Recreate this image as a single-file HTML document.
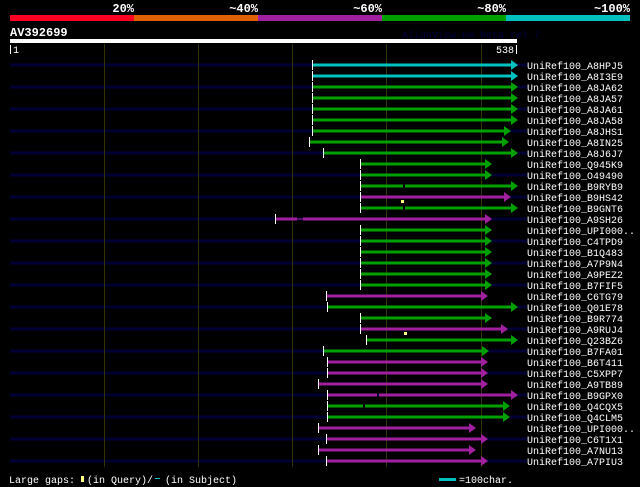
<!DOCTYPE html>
<html><head><meta charset="utf-8"><style>
html,body{margin:0;padding:0;background:#000;width:640px;height:487px;overflow:hidden}
svg{display:block}
text{font-family:"Liberation Mono",monospace}
</style></head><body>
<svg width="640" height="487" xmlns="http://www.w3.org/2000/svg">
<rect width="640" height="487" fill="#000"/>
<g font-size="12" font-weight="bold" fill="#fff" text-anchor="end">
<text x="134" y="12">20%</text><text x="258" y="12">~40%</text><text x="382" y="12">~60%</text><text x="506" y="12">~80%</text><text x="630" y="12">~100%</text>
</g>
<rect x="10" y="15" width="124" height="6" fill="#ff0020"/>
<rect x="134" y="15" width="124" height="6" fill="#e06000"/>
<rect x="258" y="15" width="124" height="6" fill="#a020a0"/>
<rect x="382" y="15" width="124" height="6" fill="#00a000"/>
<rect x="506" y="15" width="124" height="6" fill="#00c0c0"/>
<text x="10" y="36" font-size="12" font-weight="bold" fill="#fff">AV392699</text>
<text x="402" y="38" font-size="10" fill="#000040">AlignView.pm Beta rel.7</text>
<rect x="10" y="39" width="507" height="4" fill="#fff"/>
<rect x="10" y="45" width="1" height="9" fill="#fff"/>
<text x="13" y="53" font-size="10" fill="#fff">1</text>
<text x="514" y="53" font-size="10" fill="#fff" text-anchor="end">538</text>
<rect x="516" y="45" width="1" height="9" fill="#fff"/>
<g fill="#000033">
<rect x="10" y="63.5" width="517" height="3"/><rect x="10" y="85.5" width="517" height="3"/><rect x="10" y="107.5" width="517" height="3"/><rect x="10" y="129.5" width="517" height="3"/><rect x="10" y="151.5" width="517" height="3"/><rect x="10" y="173.5" width="517" height="3"/><rect x="10" y="195.5" width="517" height="3"/><rect x="10" y="217.5" width="517" height="3"/><rect x="10" y="239.5" width="517" height="3"/><rect x="10" y="261.5" width="517" height="3"/><rect x="10" y="283.5" width="517" height="3"/><rect x="10" y="305.5" width="517" height="3"/><rect x="10" y="327.5" width="517" height="3"/><rect x="10" y="349.5" width="517" height="3"/><rect x="10" y="371.5" width="517" height="3"/><rect x="10" y="393.5" width="517" height="3"/><rect x="10" y="415.5" width="517" height="3"/><rect x="10" y="437.5" width="517" height="3"/><rect x="10" y="459.5" width="517" height="3"/>
</g>
<g fill="#333300"><rect x="104" y="44" width="1" height="423"/><rect x="198" y="44" width="1" height="423"/><rect x="292" y="44" width="1" height="423"/><rect x="386" y="44" width="1" height="423"/><rect x="481" y="44" width="1" height="423"/></g>
<g id="bars">
<!-- row helper: bar rect, tick, arrow -->
<g fill="#00c0c0"><rect x="312" y="63.5" width="200" height="3"/><rect x="312" y="74.5" width="200" height="3"/>
<polygon points="511,60 518,65 511,70"/><polygon points="511,71 518,76 511,81"/></g>
<g fill="#00a000">
<rect x="312" y="85.5" width="200" height="3"/><polygon points="511,82 518,87 511,92"/>
<rect x="312" y="96.5" width="200" height="3"/><polygon points="511,93 518,98 511,103"/>
<rect x="312" y="107.5" width="200" height="3"/><polygon points="511,104 518,109 511,114"/>
<rect x="312" y="118.5" width="200" height="3"/><polygon points="511,115 518,120 511,125"/>
<rect x="312" y="129.5" width="193" height="3"/><polygon points="504,126 511,131 504,136"/>
<rect x="309" y="140.5" width="194" height="3"/><polygon points="502,137 509,142 502,147"/>
<rect x="323" y="151.5" width="189" height="3"/><polygon points="511,148 518,153 511,158"/>
<rect x="360" y="162.5" width="126" height="3"/><polygon points="485,159 492,164 485,169"/>
<rect x="360" y="173.5" width="126" height="3"/><polygon points="485,170 492,175 485,180"/>
<rect x="360" y="184.5" width="43" height="3"/><rect x="405" y="184.5" width="107" height="3"/><polygon points="511,181 518,186 511,191"/>
<rect x="360" y="206.5" width="43" height="3"/><rect x="405" y="206.5" width="107" height="3"/><polygon points="511,203 518,208 511,213"/>
<rect x="360" y="228.5" width="126" height="3"/><polygon points="485,225 492,230 485,235"/>
<rect x="360" y="239.5" width="126" height="3"/><polygon points="485,236 492,241 485,246"/>
<rect x="360" y="250.5" width="126" height="3"/><polygon points="485,247 492,252 485,257"/>
<rect x="360" y="261.5" width="126" height="3"/><polygon points="485,258 492,263 485,268"/>
<rect x="360" y="272.5" width="126" height="3"/><polygon points="485,269 492,274 485,279"/>
<rect x="360" y="283.5" width="126" height="3"/><polygon points="485,280 492,285 485,290"/>
<rect x="327" y="305.5" width="185" height="3"/><polygon points="511,302 518,307 511,312"/>
<rect x="360" y="316.5" width="126" height="3"/><polygon points="485,313 492,318 485,323"/>
<rect x="366" y="338.5" width="146" height="3"/><polygon points="511,335 518,340 511,345"/>
<rect x="323" y="349.5" width="159" height="3"/><polygon points="482,346 489,351 482,356"/>
<rect x="327" y="404.5" width="36" height="3"/><rect x="365" y="404.5" width="139" height="3"/><polygon points="503,401 510,406 503,411"/>
<rect x="327" y="415.5" width="177" height="3"/><polygon points="503,412 510,417 503,422"/>
</g>
<g fill="#a020a0">
<rect x="360" y="195.5" width="145" height="3"/><polygon points="504,192 511,197 504,202"/>
<rect x="275" y="217.5" width="22" height="3"/><rect x="297" y="218.5" width="6" height="1"/><rect x="303" y="217.5" width="183" height="3"/><polygon points="485,214 492,219 485,224"/>
<rect x="326" y="294.5" width="156" height="3"/><polygon points="481,291 488,296 481,301"/>
<rect x="360" y="327.5" width="142" height="3"/><polygon points="501,324 508,329 501,334"/>
<rect x="327" y="360.5" width="155" height="3"/><polygon points="481,357 488,362 481,367"/>
<rect x="327" y="371.5" width="155" height="3"/><polygon points="481,368 488,373 481,378"/>
<rect x="318" y="382.5" width="164" height="3"/><polygon points="481,379 488,384 481,389"/>
<rect x="327" y="393.5" width="50" height="3"/><rect x="379" y="393.5" width="133" height="3"/><polygon points="511,390 518,395 511,400"/>
<rect x="318" y="426.5" width="152" height="3"/><polygon points="469,423 476,428 469,433"/>
<rect x="326" y="437.5" width="156" height="3"/><polygon points="481,434 488,439 481,444"/>
<rect x="318" y="448.5" width="152" height="3"/><polygon points="469,445 476,450 469,455"/>
<rect x="326" y="459.5" width="156" height="3"/><polygon points="481,456 488,461 481,466"/>
</g>
<g fill="#ffff80"><rect x="401" y="200" width="3" height="3"/><rect x="404" y="332" width="3" height="3"/></g>
<g fill="#fff">
<rect x="312" y="60" width="1" height="10"/><rect x="312" y="71" width="1" height="10"/><rect x="312" y="82" width="1" height="10"/><rect x="312" y="93" width="1" height="10"/><rect x="312" y="104" width="1" height="10"/><rect x="312" y="115" width="1" height="10"/><rect x="312" y="126" width="1" height="10"/><rect x="309" y="137" width="1" height="10"/><rect x="323" y="148" width="1" height="10"/><rect x="360" y="159" width="1" height="10"/><rect x="360" y="170" width="1" height="10"/><rect x="360" y="181" width="1" height="10"/><rect x="360" y="192" width="1" height="10"/><rect x="360" y="203" width="1" height="10"/><rect x="275" y="214" width="1" height="10"/><rect x="360" y="225" width="1" height="10"/><rect x="360" y="236" width="1" height="10"/><rect x="360" y="247" width="1" height="10"/><rect x="360" y="258" width="1" height="10"/><rect x="360" y="269" width="1" height="10"/><rect x="360" y="280" width="1" height="10"/><rect x="326" y="291" width="1" height="10"/><rect x="327" y="302" width="1" height="10"/><rect x="360" y="313" width="1" height="10"/><rect x="360" y="324" width="1" height="10"/><rect x="366" y="335" width="1" height="10"/><rect x="323" y="346" width="1" height="10"/><rect x="327" y="357" width="1" height="10"/><rect x="327" y="368" width="1" height="10"/><rect x="318" y="379" width="1" height="10"/><rect x="327" y="390" width="1" height="10"/><rect x="327" y="401" width="1" height="10"/><rect x="327" y="412" width="1" height="10"/><rect x="318" y="423" width="1" height="10"/><rect x="326" y="434" width="1" height="10"/><rect x="318" y="445" width="1" height="10"/><rect x="326" y="456" width="1" height="10"/>
</g>
</g>
<g font-size="10" fill="#fff">
<text x="527" y="69">UniRef100_A8HPJ5</text><text x="527" y="80">UniRef100_A8I3E9</text><text x="527" y="91">UniRef100_A8JA62</text><text x="527" y="102">UniRef100_A8JA57</text><text x="527" y="113">UniRef100_A8JA61</text><text x="527" y="124">UniRef100_A8JA58</text><text x="527" y="135">UniRef100_A8JHS1</text><text x="527" y="146">UniRef100_A8IN25</text><text x="527" y="157">UniRef100_A8J6J7</text><text x="527" y="168">UniRef100_Q945K9</text><text x="527" y="179">UniRef100_O49490</text><text x="527" y="190">UniRef100_B9RYB9</text><text x="527" y="201">UniRef100_B9HS42</text><text x="527" y="212">UniRef100_B9GNT6</text><text x="527" y="223">UniRef100_A9SH26</text><text x="527" y="234">UniRef100_UPI000..</text><text x="527" y="245">UniRef100_C4TPD9</text><text x="527" y="256">UniRef100_B1Q483</text><text x="527" y="267">UniRef100_A7P9N4</text><text x="527" y="278">UniRef100_A9PEZ2</text><text x="527" y="289">UniRef100_B7FIF5</text><text x="527" y="300">UniRef100_C6TG79</text><text x="527" y="311">UniRef100_Q01E78</text><text x="527" y="322">UniRef100_B9R774</text><text x="527" y="333">UniRef100_A9RUJ4</text><text x="527" y="344">UniRef100_Q23BZ6</text><text x="527" y="355">UniRef100_B7FA01</text><text x="527" y="366">UniRef100_B6T411</text><text x="527" y="377">UniRef100_C5XPP7</text><text x="527" y="388">UniRef100_A9TB89</text><text x="527" y="399">UniRef100_B9GPX0</text><text x="527" y="410">UniRef100_Q4CQX5</text><text x="527" y="421">UniRef100_Q4CLM5</text><text x="527" y="432">UniRef100_UPI000..</text><text x="527" y="443">UniRef100_C6T1X1</text><text x="527" y="454">UniRef100_A7NU13</text><text x="527" y="465">UniRef100_A7PIU3</text>
</g>
<g font-size="10" fill="#fff">
<text x="9" y="483">Large gaps:</text>
<rect x="81" y="476" width="3" height="6" fill="#ffff80"/>
<text x="87" y="483">(in Query)/</text>
<rect x="155" y="478" width="5" height="1" fill="#00c0c0"/>
<text x="165" y="483">(in Subject)</text>
<rect x="439" y="478" width="17" height="3" fill="#00c0c0"/>
<text x="459" y="483">=100char.</text>
</g>
</svg>
</body></html>
